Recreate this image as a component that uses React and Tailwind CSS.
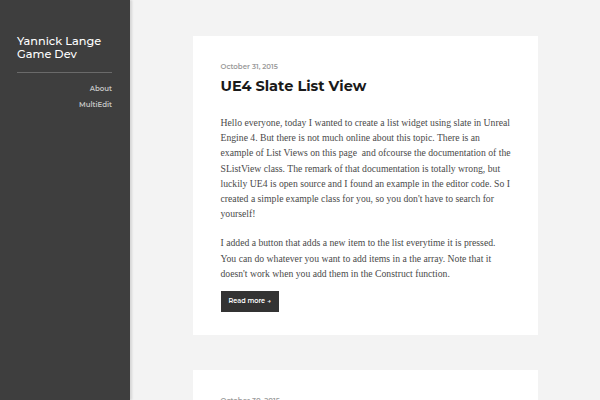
export default function App() {
  const sans = { fontFamily: '"Montserrat", Inter, "DejaVu Sans", sans-serif' };
  const serif = { fontFamily: '"Liberation Serif", serif' };
  return (
    <div className="flex w-[600px] h-[400px] overflow-hidden bg-[#f3f3f3]">
      <aside className="w-[130px] shrink-0 h-full bg-[#3e3e3e] shadow-[2px_0_2px_rgba(0,0,0,0.12)] pt-[35px] px-[17px]" style={sans}>
        <h1 className="text-white text-[11.3px] leading-[13px] font-medium">Yannick Lange<br />Game Dev</h1>
        <div className="mt-[11px] h-px bg-[#6a6a6a] w-[95px]" />
        <nav className="flex flex-col items-end w-[95px] mt-[12px] gap-[8px] text-[7px] leading-[8px] font-semibold text-[#c4c4c4]">
          <span>About</span>
          <span>MultiEdit</span>
        </nav>
      </aside>
      <main className="flex-1 flex flex-col items-center pt-[36px] gap-[35px]">
        <article className="w-[345px] shrink-0 bg-white px-[28px] pt-[27px] pb-[23px]">
          <div className="text-[7px] leading-[8px] font-semibold text-[#9a9a9a]" style={sans}>October 31, 2015</div>
          <h2 className="mt-[6px] text-[14.5px] leading-[18px] font-bold text-[#1a1a1a]" style={sans}>UE4 Slate List View</h2>
          <div className="mt-[20px] text-[9.7px] leading-[15.2px] text-[#4a4a4a] whitespace-nowrap" style={serif}>
            <p>Hello everyone, today I wanted to create a list widget using slate in Unreal<br />Engine 4. But there is not much online about this topic. There is an<br />example of List Views on this page&nbsp; and ofcourse the documentation of the<br />SListView class. The remark of that documentation is totally wrong, but<br />luckily UE4 is open source and I found an example in the editor code. So I<br />created a simple example class for you, so you don't have to search for<br />yourself!</p>
            <p className="mt-[14px]">I added a button that adds a new item to the list everytime it is pressed.<br />You can do whatever you want to add items in a the array. Note that it<br />doesn't work when you add them in the Construct function.</p>
          </div>
          <button className="mt-[10px] h-[21px] px-[8px] bg-[#333333] text-white text-[6.5px] font-semibold" style={sans}>Read more →</button>
        </article>
        <article className="w-[345px] shrink-0 h-[120px] bg-white px-[28px] pt-[27px]">
          <div className="text-[7px] leading-[8px] font-semibold text-[#9a9a9a]" style={sans}>October 30, 2015</div>
        </article>
      </main>
    </div>
  );
}
